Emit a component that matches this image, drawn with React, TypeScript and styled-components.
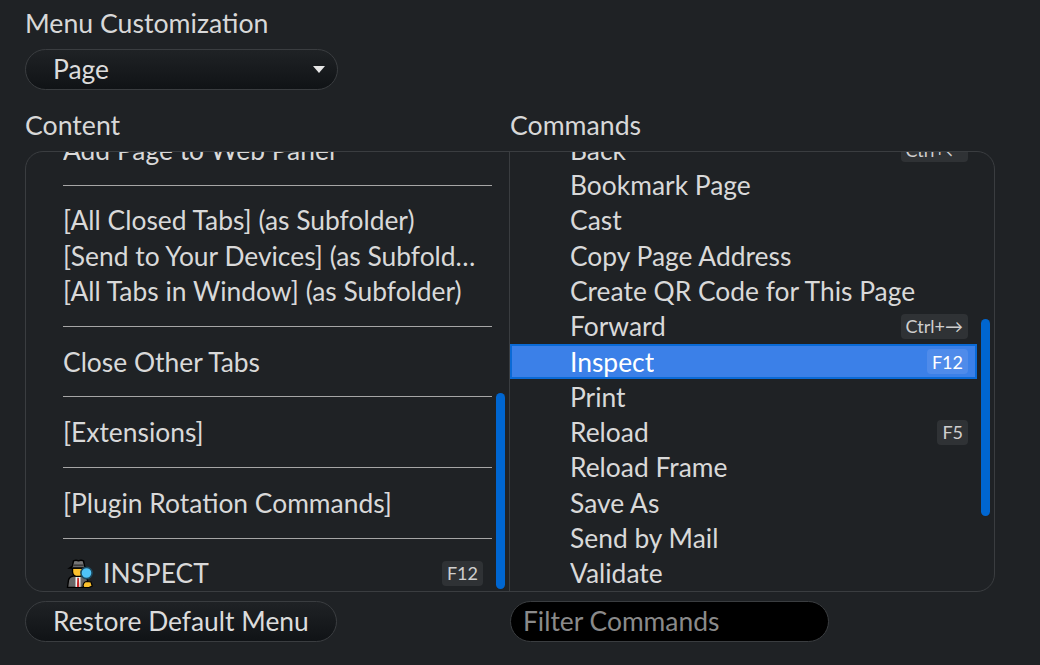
import React from "react";
import styled, { createGlobalStyle } from "styled-components";

const GlobalStyle = createGlobalStyle`
  html, body {
    margin: 0;
    padding: 0;
    background: #1f2225;
  }
  * {
    box-sizing: border-box;
  }
`;

const PageWrapper = styled.div`
  width: 1040px;
  height: 665px;
  padding: 5px 45px 0 25px;
  overflow: hidden;
  background: #1f2225;
  color: #d9d9d9;
  font-family: Lato, "Liberation Sans", sans-serif;
  font-size: 26.4px;
  font-feature-settings: "liga" 1;
`;

const Heading = styled.div`
  height: 36px;
  line-height: 36px;
  font-size: 26.67px;
  color: #d8d8d8;
`;

const SelectBox = styled.div`
  width: 313px;
  height: 41px;
  margin-top: 8px;
  padding: 0 12px 0 27px;
  border-radius: 21px;
  border: 1px solid #3a3d40;
  background: linear-gradient(#1f2225, #101316);
  display: flex;
  align-items: center;
  justify-content: space-between;
  color: #dcdcdc;
`;

const SelectLabel = styled.span`
  position: relative;
  top: -1px;
`;

const Arrow = styled.span`
  width: 0;
  height: 0;
  border-left: 6.5px solid transparent;
  border-right: 6.5px solid transparent;
  border-top: 7px solid #e6e6e6;
`;

const HeadingRow = styled.div`
  display: grid;
  grid-template-columns: 485px 485px;
  margin-top: 17px;
  height: 36px;
`;

const Panel = styled.div`
  display: grid;
  grid-template-columns: 483px 485px;
  margin-top: 8px;
  height: 441px;
  border: 1px solid #3a3d40;
  border-radius: 18px;
  overflow: hidden;
`;

const ListPane = styled.div<{ $divider?: boolean }>`
  position: relative;
  overflow: hidden;
  border-left: ${(p) => (p.$divider ? "1px solid #3a3d40" : "none")};
`;

const ScrollInner = styled.div`
  margin-top: -19.9px;
`;

const Row = styled.div<{ $indent: number; $right: number; $selected?: boolean }>`
  height: 35.3px;
  display: flex;
  align-items: center;
  justify-content: space-between;
  padding: 0 ${(p) => (p.$selected ? 9 : p.$right)}px 0 ${(p) => p.$indent}px;
  margin-right: ${(p) => (p.$selected ? "17px" : "0")};
  white-space: nowrap;
  color: ${(p) => (p.$selected ? "#ffffff" : "#d9d9d9")};
  background: ${(p) => (p.$selected ? "#3b80e8" : "transparent")};
  box-shadow: ${(p) => (p.$selected ? "inset 0 0 0 2px #0a6ad6" : "none")};
`;

const RowLabel = styled.span`
  display: flex;
  align-items: center;
  gap: 10px;
  min-width: 0;
  overflow: hidden;
  text-overflow: ellipsis;
`;

const Truncated = styled.span`
  display: block;
  width: 416px;
  overflow: hidden;
  text-overflow: ellipsis;
`;

const Separator = styled.div`
  height: 35.3px;
  margin: 0 17px 0 37px;
  display: flex;
  align-items: center;

  &::after {
    content: "";
    flex: 1;
    height: 1px;
    background: #a6a6a6;
  }
`;

const Shortcut = styled.span<{ $selected?: boolean }>`
  height: 25px;
  padding: 0 5px;
  border-radius: 4px;
  display: inline-flex;
  align-items: center;
  font-size: 18px;
  color: ${(p) => (p.$selected ? "#ffffff" : "#cfcfcf")};
  background: ${(p) => (p.$selected ? "#4f8bea" : "#2f3235")};
`;

const ScrollThumb = styled.div<{ $top: number; $height: number }>`
  position: absolute;
  top: ${(p) => p.$top}px;
  right: 4px;
  width: 9px;
  height: ${(p) => p.$height}px;
  border-radius: 5px;
  background: #0066d0;
`;

const Footer = styled.div`
  display: grid;
  grid-template-columns: 485px 485px;
  margin-top: 9px;
`;

const RestoreButton = styled.button`
  width: 312px;
  height: 41px;
  padding: 0 0 1px 27px;
  text-align: left;
  border-radius: 21px;
  border: 1px solid #3a3d40;
  background: linear-gradient(#1f2225, #101316);
  color: #dcdcdc;
  font: inherit;
`;

const FilterInput = styled.input`
  width: 319px;
  height: 41px;
  padding: 0 0 1px 12px;
  border-radius: 21px;
  border: 1px solid #3a3d40;
  background: #000;
  color: #dcdcdc;
  font: inherit;
  outline: none;

  &::placeholder {
    color: #8a8a8a;
    opacity: 1;
  }
`;

const IconSlot = styled.span`
  display: inline-flex;
  margin-left: 3px;
`;

const DetectiveIcon = () => (
  <IconSlot>
    <svg width="27" height="29" viewBox="0 0 27 29">
      <path d="M1.5 28.5 L2.5 21 Q3.5 17.5 7.5 17 H16.5 Q20.5 17.5 21.5 21 V28.5 Z" fill="#666" stroke="#000" strokeWidth="1.4" />
      <path d="M9.5 18 H14.5 V28 H9.5 Z" fill="#f2f2f2" />
      <path d="M11.3 19 H12.9 L13.3 28 H10.9 Z" fill="#c62828" />
      <path d="M6.5 9 H17.5 V13 Q17 17.5 12 17.5 Q7 17.5 6.5 13 Z" fill="#fbc02d" stroke="#000" strokeWidth="1.4" />
      <path d="M3.5 9 L6.5 7 L7.5 1.8 Q10 0.6 12.5 1.8 Q15 0.6 17.5 1.8 L18.5 7 L21 9 Z" fill="#757575" stroke="#000" strokeWidth="1.4" />
      <rect x="7.2" y="5.4" width="10.6" height="1.8" fill="#3c3c3c" />
      <circle cx="20.5" cy="14" r="5.6" fill="#4fc3f7" stroke="#1c4a60" strokeWidth="1.6" />
      <path d="M17 27 Q17.5 22.5 21 22.5 L25 23 L26.3 27 L23 28.5 H18 Z" fill="#fbc02d" stroke="#000" strokeWidth="1.2" />
    </svg>
  </IconSlot>
);

type Item =
  | { kind: "sep" }
  | { kind: "text"; label: string; key?: string; truncate?: boolean; icon?: boolean; selected?: boolean };

const sep: Item = { kind: "sep" };
const text = (label: string, key?: string): Item => ({ kind: "text", label, key });

const contentItems: Item[] = [
  text("Add Page to Web Panel"),
  sep,
  text("[All Closed Tabs] (as Subfolder)"),
  { kind: "text", label: "[Send to Your Devices] (as Subfolder)", truncate: true },
  text("[All Tabs in Window] (as Subfolder)"),
  sep,
  text("Close Other Tabs"),
  sep,
  text("[Extensions]"),
  sep,
  text("[Plugin Rotation Commands]"),
  sep,
  { kind: "text", label: "INSPECT", key: "F12", icon: true },
];

const commandItems: Item[] = [
  text("Back", "Ctrl+←"),
  text("Bookmark Page"),
  text("Cast"),
  text("Copy Page Address"),
  text("Create QR Code for This Page"),
  text("Forward", "Ctrl+→"),
  { kind: "text", label: "Inspect", key: "F12", selected: true },
  text("Print"),
  text("Reload", "F5"),
  text("Reload Frame"),
  text("Save As"),
  text("Send by Mail"),
  text("Validate"),
];

const App: React.FC = () => {
  return (
    <PageWrapper>
      <GlobalStyle />
      <Heading>Menu Customization</Heading>
      <SelectBox>
        <SelectLabel>Page</SelectLabel>
        <Arrow />
      </SelectBox>

      <HeadingRow>
        <Heading>Content</Heading>
        <Heading>Commands</Heading>
      </HeadingRow>

      <Panel>
        <ListPane>
          <ScrollInner>
            {contentItems.map((item, i) =>
              item.kind === "sep" ? (
                <Separator key={i} />
              ) : (
                <Row key={i} $indent={37} $right={26}>
                  <RowLabel>
                    {item.icon && <DetectiveIcon />}
                    {item.truncate ? <Truncated>{item.label}</Truncated> : item.label}
                  </RowLabel>
                  {item.key && <Shortcut>{item.key}</Shortcut>}
                </Row>
              )
            )}
          </ScrollInner>
          <ScrollThumb $top={241} $height={196} />
        </ListPane>

        <ListPane $divider>
          <ScrollInner>
            {commandItems.map((item, i) =>
              item.kind === "text" ? (
                <Row key={i} $indent={60} $right={26} $selected={item.selected}>
                  <RowLabel>{item.label}</RowLabel>
                  {item.key && <Shortcut $selected={item.selected}>{item.key}</Shortcut>}
                </Row>
              ) : null
            )}
          </ScrollInner>
          <ScrollThumb $top={167} $height={197} />
        </ListPane>
      </Panel>

      <Footer>
        <RestoreButton>Restore Default Menu</RestoreButton>
        <FilterInput placeholder="Filter Commands" />
      </Footer>
    </PageWrapper>
  );
};

export default App;
